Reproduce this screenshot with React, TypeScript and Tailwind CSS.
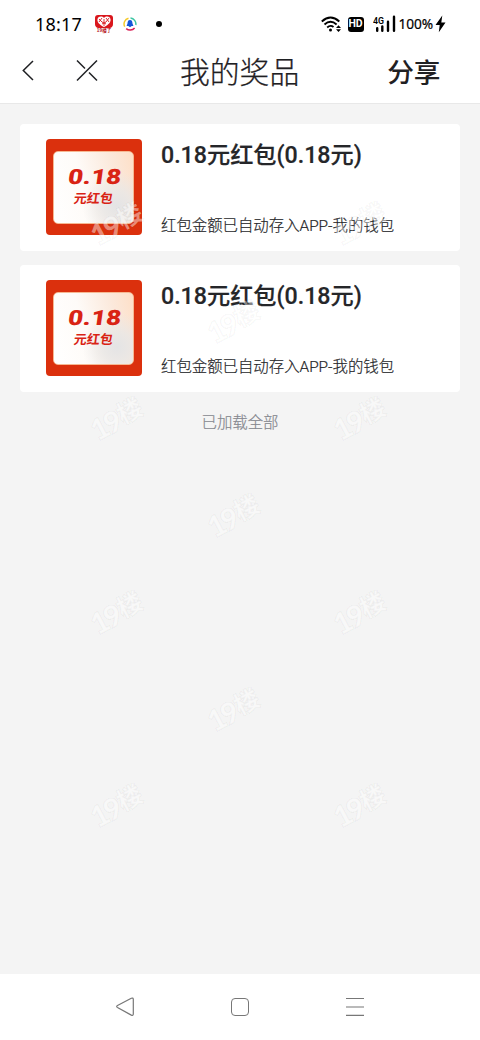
interface Prize {
  id: number
  amount: string
  title: string
  description: string
}

const prizes: Prize[] = [
  { id: 1, amount: "0.18", title: "0.18元红包(0.18元)", description: "红包金额已自动存入APP-我的钱包" },
  { id: 2, amount: "0.18", title: "0.18元红包(0.18元)", description: "红包金额已自动存入APP-我的钱包" },
]

const watermarks = [
  [119, 225],
  [362, 225],
  [236, 323],
  [119, 420],
  [362, 420],
  [236, 517],
  [119, 614],
  [362, 614],
  [236, 711],
  [119, 807],
  [362, 807],
]

function StatusBar() {
  return (
    <div className="flex h-12 shrink-0 items-center pl-[35px] pr-[34px] text-black">
      <span className="w-[60px] whitespace-nowrap font-['Noto_Sans'] text-[18px] leading-none tracking-[0.2px]">18:17</span>
      <svg width="18" height="18" viewBox="0 0 18 18" className="-mt-px overflow-visible">
        <path d="M3 0h12q3 0 3 3v6q0 3-3 4H3q-3-1-3-4V3q0-3 3-3z" fill="#d9161c" />
        <path d="M9 3C7 .7 2.4 1.2 2.4 5c0 3 3.5 5.5 6.6 7 3.100-1.500 6.600-4 6.600-7C15.600 1.200 11 .7 9 3z" fill="#fff" />
        <path d="M4 4l3 3m0-4L4 7m7-4l3 4m0-4l-3 4M7 9l4-2M7 7l4 2M9 4v7" stroke="#d9161c" strokeWidth=".9" />
        <text x="9" y="17.300" textAnchor="middle" fontSize="4.500" fontWeight="700" fontFamily="Noto Sans CJK SC" fill="#b51218">19楼了</text>
      </svg>
      <svg width="14" height="14" viewBox="0 0 14 14" className="ml-[10px]" fill="none" strokeWidth="1.500">
        <path d="M1.700 9.700A6 6 0 0 1 5.500 1.200" stroke="#f5c928" />
        <path d="M7.500 1A6 6 0 0 1 12.800 8" stroke="#3fc6a4" />
        <path d="M11.600 11A6 6 0 0 1 3.200 11.700" stroke="#d91f55" />
        <path d="M7 3.100c2 0 2.400 1.800 2.500 3.400l.9 2.500H8.700L7 10.300 5.300 9H3.600l.9-2.500C4.600 4.900 5 3.100 7 3.100z" fill="#1456d8" />
      </svg>
      <span className="ml-[19px] size-[6px] rounded-full bg-black" />
      <div className="ml-auto flex items-center">
        <svg width="21" height="17" viewBox="0 0 21 17" fill="none" stroke="#000" strokeWidth="1.900">
          <path d="M.8 5.500Q9.500-2.300 18.300 5.500M3.500 8.500Q9.500 3.200 15.600 8.500M6.200 11.500Q9.500 8.500 12.500 11" />
          <circle cx="9.500" cy="14" r="1.500" fill="#000" stroke="none" />
          <path d="M15 12l2.500-2.700L20 12zM15 13.300l2.500 2.700 2.500-2.700z" fill="#000" stroke="none" />
        </svg>
        <span className="ml-[6px] flex h-[15px] w-[16px] items-center justify-center rounded-[3px] bg-black font-['Roboto'] text-[10.500px] font-bold leading-none text-white">HD</span>
        <svg width="24" height="18" viewBox="0 0 24 18" className="ml-[9px]">
          <text x="0" y="8.500" fontSize="9" fontWeight="600" fontFamily="Roboto" textLength="11" lengthAdjust="spacingAndGlyphs">4G</text>
          <path d="M4.200 13.200v2.600M9.300 11.500v4.300M15 6.800v9M21 1.700v14.100" stroke="#000" strokeWidth="2.400" strokeLinecap="round" />
        </svg>
        <span className="ml-[2px] whitespace-nowrap font-['Noto_Sans'] text-[13.700px] leading-none tracking-[-0.1px] [-webkit-text-stroke:0.2px_#000]">100%</span>
        <svg width="11" height="18" viewBox="0 0 11 18" className="ml-[2px]">
          <path d="M7.300.5L.5 10h4.200L3.800 17.300 10.500 7.500H6.300z" />
        </svg>
      </div>
    </div>
  )
}

function Header() {
  return (
    <header className="flex h-14 shrink-0 items-center border-b border-[#e8e8e8] pl-5 pr-[39.500px] text-[#1f2023]">
      <svg width="80" height="24" viewBox="0 0 80 24" fill="none" stroke="currentColor" strokeWidth="1.500" className="-mt-[11px]">
        <path d="M13 3L3.300 12.500 13 22" />
        <path d="M57 2.500l8 8m4 4l8 8M77 2.500l-20 20" />
      </svg>
      <h1 className="-mt-[9px] ml-[80px] whitespace-nowrap text-[29.800px] font-light leading-none [-webkit-text-stroke:0.250px_#1f2023]">我的奖品</h1>
      <button className="-mt-[9px] ml-auto whitespace-nowrap text-[26.700px] font-medium leading-none">分享</button>
    </header>
  )
}

function PrizeImage({ amount }: { amount: string }) {
  return (
    <div className="flex size-24 shrink-0 items-center justify-center rounded-[4px] bg-[#db300d]">
      <div className="flex h-[73px] w-[81px] flex-col items-center rounded-[5px] border border-[#f6b892] bg-[radial-gradient(circle_at_80%_76%,#e4e4e5_0%,rgba(232,231,230,0.8)_18%,rgba(240,238,235,0)_42%),linear-gradient(75deg,#fff_0%,#fefbf8_40%,#fbe9dc_75%,#fedfc7_100%)] text-[#d92314]">
        <svg width="64" height="24" viewBox="0 0 64 24" className="mt-[13px] overflow-visible">
          <text
            x="8"
            y="19"
            transform="skewX(-8)"
            fontSize="21"
            fontWeight="900"
            fontFamily="Roboto"
            textLength="53"
            lengthAdjust="spacingAndGlyphs"
            fill="currentColor"
          >
            {amount}
          </text>
        </svg>
        <span className="mt-[2px] -skew-x-[8deg] whitespace-nowrap text-[13px] font-bold leading-none">元红包</span>
      </div>
    </div>
  )
}

function PrizeCard({ prize }: { prize: Prize }) {
  return (
    <article className="flex h-[127px] rounded-[4px] bg-white pl-[25.500px] pt-[15.500px]">
      <PrizeImage amount={prize.amount} />
      <div className="ml-[19.500px] flex flex-col text-[#252629]">
        <h2 className="mt-[4px] whitespace-nowrap font-['Roboto','Noto_Sans_CJK_SC',sans-serif] text-[23.200px] font-medium leading-6 [-webkit-text-stroke:0.2px_#252629]">{prize.title}</h2>
        <p className="mt-[49px] whitespace-nowrap font-['Roboto','Noto_Sans_CJK_SC',sans-serif] text-[15.400px] font-light leading-5 [-webkit-text-stroke:0.2px_#252629]">{prize.description}</p>
      </div>
    </article>
  )
}

function Watermark() {
  return (
    <svg width="480" height="1040" className="pointer-events-none absolute inset-0">
      {watermarks.map(([x, y]) => (
        <g
          key={`${x}-${y}`}
          transform={`translate(${x} ${y}) rotate(-28)`}
          fill="#fff"
          fillOpacity=".45"
          stroke="#000"
          strokeOpacity=".045"
          strokeWidth="1.500"
          paintOrder="stroke"
        >
          <text x="-29" y="9" fontSize="29" fontWeight="900" fontFamily="Lato" textLength="31">19</text>
          <text x="1" y="6" fontSize="25" fontWeight="700" fontFamily="Noto Sans CJK SC">楼</text>
        </g>
      ))}
    </svg>
  )
}

function NavigationBar() {
  return (
    <nav className="flex h-[66px] shrink-0 items-center justify-between bg-white px-[115px] text-[#777]">
      <svg width="20" height="20" viewBox="0 0 20 20" fill="none" stroke="currentColor" strokeWidth="1.200">
        <path d="M16.300 1.300L2.500 8.500q-1.700 1 0 2l13.800 7.600q2 .8 2-1V2.300q0-1.800-2-1z" />
      </svg>
      <span className="size-[18px] rounded-[4px] border border-[#777]" />
      <svg width="20" height="20" viewBox="0 0 20 20" stroke="currentColor" strokeWidth="1.200">
        <path d="M1 1.500h18M1 10h18M1 18.300h18" />
      </svg>
    </nav>
  )
}

export default function App() {
  return (
    <div className="relative flex h-[1040px] w-[480px] flex-col overflow-hidden bg-white font-['Noto_Sans_CJK_SC',sans-serif]">
      <StatusBar />
      <Header />
      <main className="flex flex-1 flex-col gap-[14px] bg-[#f4f4f4] px-5 pt-[19.500px]">
        {prizes.map((prize) => (
          <PrizeCard key={prize.id} prize={prize} />
        ))}
        <p className="mt-[3px] text-center text-[15.400px] font-light leading-6 text-[#85878f] [-webkit-text-stroke:0.2px_#85878f]">已加载全部</p>
      </main>
      <NavigationBar />
      <Watermark />
    </div>
  )
}
